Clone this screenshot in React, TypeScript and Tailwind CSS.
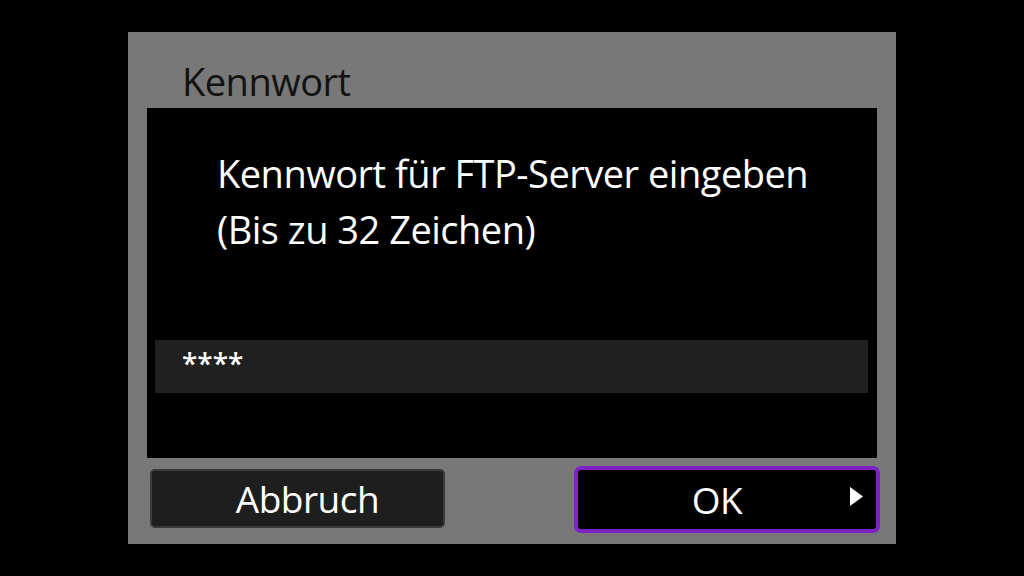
import React from "react";

export default function App() {
  const font = { fontFamily: '"Open Sans", "Noto Sans", sans-serif' };
  return (
    <div className="w-[1024px] h-[576px] bg-black flex items-center justify-center" style={font}>
      <div className="w-[768px] h-[512px] bg-[#787878] flex flex-col">
        <div className="h-[76px] pl-[54px] pt-[24px] text-[38px] leading-[50px] text-[#121212] tracking-[-0.5px]">
          Kennwort
        </div>
        <div className="mx-[19px] h-[350px] bg-black flex flex-col">
          <div className="pl-[70px] pt-[37px] text-white text-[38px] leading-[56px] tracking-[-0.5px]">
            <div>Kennwort für FTP-Server eingeben</div>
            <div>(Bis zu 32 Zeichen)</div>
          </div>
          <div className="mt-auto mb-[65px] ml-[8px] mr-[9px] h-[53px] bg-[#202020] flex items-start pl-[27px]">
            <span className="text-white text-[28px] leading-none mt-[9px] font-semibold">****</span>
          </div>
        </div>
        <div className="flex-1 flex justify-between pl-[22px] pr-[16px]">
          <div className="mt-[11px] w-[295px] h-[59px] bg-[#1e1e1e] border-2 border-[#3a3a3a] rounded-[5px] flex items-center justify-center pl-[20px] text-white text-[37px] tracking-[-0.5px]">
            Abbruch
          </div>
          <div className="relative mt-[8px] w-[306px] h-[67px] bg-black border-4 border-[#7d22c4] rounded-[7px] flex items-center justify-center pr-[20px] text-white text-[37px] tracking-[-0.5px]">
            OK
            <svg className="absolute right-[13px] top-[17px]" width="13" height="19" viewBox="0 0 13 19">
              <polygon points="0,0 13,9.5 0,19" fill="white" />
            </svg>
          </div>
        </div>
      </div>
    </div>
  );
}
